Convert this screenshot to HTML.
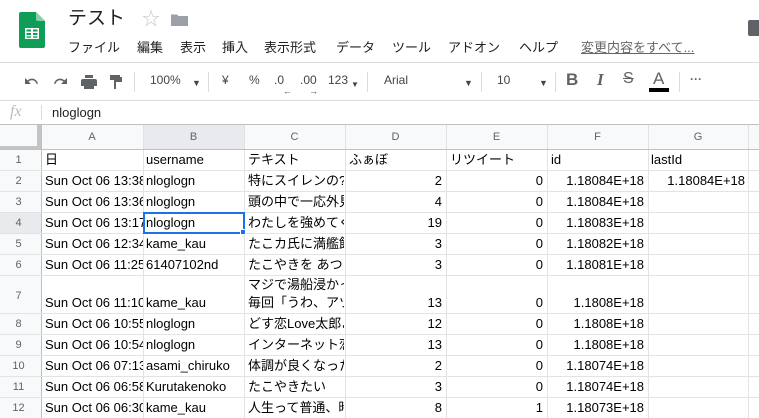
<!DOCTYPE html>
<html><head><meta charset="utf-8"><style>
*{margin:0;padding:0;box-sizing:border-box}
body{width:759px;height:418px;overflow:hidden;background:#fff;font-family:"Liberation Sans","Noto Sans CJK JP",sans-serif;position:relative;color:#202124}
.a{position:absolute;white-space:nowrap}
.menu{font-size:13px;top:39px;color:#202124;line-height:17px}
.tb{top:73px;font-size:12px;color:#444;line-height:15px}
.sep{position:absolute;top:72px;width:1px;height:20px;background:#dadce0}
.gl{position:absolute;background:#e2e3e3}
.cell{position:absolute;font-size:13px;white-space:nowrap;overflow:hidden;color:#000;line-height:16px;height:16px}
.hd{position:absolute;font-size:11px;color:#5f6368;text-align:center;line-height:13px}
</style></head><body>
<svg class="a" style="left:19px;top:12px" width="26" height="36" viewBox="0 0 26 36">
<path d="M2 0H17L26 9V34a2 2 0 0 1-2 2H2a2 2 0 0 1-2-2V2a2 2 0 0 1 2-2z" fill="#0f9d58"/>
<path d="M17 0L26 9H19a2 2 0 0 1-2-2z" fill="#87ceac"/>
<rect x="6" y="16" width="14" height="11" fill="#fff"/>
<rect x="7.5" y="17.5" width="4.5" height="2" fill="#0f9d58"/><rect x="14" y="17.5" width="4.5" height="2" fill="#0f9d58"/>
<rect x="7.5" y="21" width="4.5" height="2" fill="#0f9d58"/><rect x="14" y="21" width="4.5" height="2" fill="#0f9d58"/>
<rect x="7.5" y="24.3" width="4.5" height="1.4" fill="#0f9d58"/><rect x="14" y="24.3" width="4.5" height="1.4" fill="#0f9d58"/>
</svg>
<div class="a" style="left:68px;top:8px;font-size:19px;line-height:22px">テスト</div>
<div class="a" style="left:142px;top:8px;font-size:18px;color:#c8c8c8;line-height:22px">☆</div>
<svg class="a" style="left:171px;top:13px" width="17" height="13"><path d="M0 1.5h6l1.5 1.5H17V13H0z" fill="#9aa0a6"/></svg>
<div class="a menu" style="left:68px">ファイル</div>
<div class="a menu" style="left:137px">編集</div>
<div class="a menu" style="left:180px">表示</div>
<div class="a menu" style="left:222px">挿入</div>
<div class="a menu" style="left:264px">表示形式</div>
<div class="a menu" style="left:336px">データ</div>
<div class="a menu" style="left:392px">ツール</div>
<div class="a menu" style="left:448px">アドオン</div>
<div class="a menu" style="left:519px">ヘルプ</div>
<div class="a menu" style="left:581px;color:#666;text-decoration:underline">変更内容をすべて...</div>
<div class="a" style="left:748px;top:20px;width:14px;height:16px;background:#5f6368;border-radius:2px"></div>
<div class="a" style="left:0;top:62px;width:759px;height:1px;background:#dadce0"></div>
<svg class="a" style="left:22px;top:73px" width="100" height="16" fill="#5f6368">
<path d="M3 5v6h6L6.5 8.5C8 7.3 10 7 11.5 7.5 13 8 14 9.3 14.5 11l1.5-.5C15.3 8.2 13.6 6.3 11.3 5.8 9.3 5.4 7.2 5.9 5.6 7.4z"/>
<path d="M45 5v6h-6l2.5-2.5C40 7.3 38 7 36.5 7.5 35 8 34 9.3 33.5 11L32 10.5c.7-2.3 2.4-4.2 4.7-4.7 2-.4 4.1.1 5.7 1.6z"/>
<path d="M61 6h12a2 2 0 0 1 2 2v5h-3v3h-10v-3h-3V8a2 2 0 0 1 2-2zM63 2h8v3h-8zM64 11h6v3h-6z"/>
<path d="M88 2h10v5h-10zM98 4h2v5h-6v7h-2V7h6z"/>
</svg>
<div class="sep" style="left:134px"></div>
<div class="a tb" style="left:150px">100%</div>
<div class="a tb" style="left:192px;font-size:9px;top:76px">▼</div>
<div class="sep" style="left:208px"></div>
<div class="a tb" style="left:222px">¥</div>
<div class="a tb" style="left:249px">%</div>
<div class="a tb" style="left:274px">.0</div>
<div class="a tb" style="left:300px">.00</div>
<div class="a" style="left:283px;top:86px;font-size:9px;color:#444">←</div>
<div class="a" style="left:309px;top:86px;font-size:9px;color:#444">→</div>
<div class="a tb" style="left:328px">123</div>
<div class="a tb" style="left:351px;font-size:8px;top:77px">▼</div>
<div class="sep" style="left:367px"></div>
<div class="a tb" style="left:384px">Arial</div>
<div class="a tb" style="left:464px;font-size:9px;top:76px">▼</div>
<div class="sep" style="left:481px"></div>
<div class="a tb" style="left:497px">10</div>
<div class="a tb" style="left:539px;font-size:9px;top:76px">▼</div>
<div class="sep" style="left:555px"></div>
<div class="a" style="left:566px;top:70px;font-size:17px;font-weight:bold;color:#5f6368">B</div>
<div class="a" style="left:597px;top:70px;font-size:17px;font-style:italic;color:#5f6368;font-family:'Liberation Serif',serif;font-weight:bold">I</div>
<div class="a" style="left:623px;top:70px;font-size:16px;color:#5f6368;text-decoration:line-through">S</div>
<div class="a" style="left:653px;top:69px;font-size:17px;color:#5f6368">A</div>
<div class="a" style="left:649px;top:88px;width:20px;height:4px;background:#000"></div>
<div class="sep" style="left:679px"></div>
<div class="a tb" style="left:690px;top:72px;font-weight:bold;color:#5f6368">···</div>
<div class="a" style="left:0;top:100px;width:759px;height:1px;background:#dadce0"></div>
<div class="a" style="left:10px;top:103px;font-size:16px;color:#bbb;font-style:italic;font-family:'Liberation Serif',serif">fx</div>
<div class="a" style="left:41px;top:105px;width:1px;height:15px;background:#dadce0"></div>
<div class="a" style="left:52px;top:105px;font-size:13px">nloglogn</div>
<div class="a" style="left:0;top:125px;width:759px;height:24px;background:#f8f9fa"></div>
<div class="a" style="left:0;top:125px;width:41px;height:293px;background:#f8f9fa"></div>
<div class="a" style="left:143px;top:125px;width:101px;height:24px;background:#e8eaed"></div>
<div class="a" style="left:0;top:212px;width:41px;height:21px;background:#e8eaed"></div>
<div class="a" style="left:0;top:124px;width:759px;height:1px;background:#c0c0c0"></div>
<div class="a" style="left:37px;top:125px;width:4px;height:24px;background:#c4c4c4"></div>
<div class="a" style="left:0;top:146px;width:41px;height:3px;background:#c4c4c4"></div>
<div class="gl" style="left:41px;top:125px;width:1px;height:293px;background:#c0c0c0"></div>
<div class="gl" style="left:143px;top:125px;width:1px;height:293px"></div>
<div class="gl" style="left:244px;top:125px;width:1px;height:293px"></div>
<div class="gl" style="left:345px;top:125px;width:1px;height:293px"></div>
<div class="gl" style="left:446px;top:125px;width:1px;height:293px"></div>
<div class="gl" style="left:547px;top:125px;width:1px;height:293px"></div>
<div class="gl" style="left:648px;top:125px;width:1px;height:293px"></div>
<div class="gl" style="left:748px;top:125px;width:1px;height:293px"></div>
<div class="gl" style="left:0;top:149px;width:759px;height:1px;background:#c0c0c0"></div>
<div class="gl" style="left:0;top:170px;width:759px;height:1px"></div>
<div class="gl" style="left:0;top:191px;width:759px;height:1px"></div>
<div class="gl" style="left:0;top:212px;width:759px;height:1px"></div>
<div class="gl" style="left:0;top:233px;width:759px;height:1px"></div>
<div class="gl" style="left:0;top:254px;width:759px;height:1px"></div>
<div class="gl" style="left:0;top:275px;width:759px;height:1px"></div>
<div class="gl" style="left:0;top:313px;width:759px;height:1px"></div>
<div class="gl" style="left:0;top:334px;width:759px;height:1px"></div>
<div class="gl" style="left:0;top:355px;width:759px;height:1px"></div>
<div class="gl" style="left:0;top:376px;width:759px;height:1px"></div>
<div class="gl" style="left:0;top:397px;width:759px;height:1px"></div>
<div class="hd" style="left:41px;top:131px;width:102px">A</div>
<div class="hd" style="left:143px;top:131px;width:101px">B</div>
<div class="hd" style="left:244px;top:131px;width:101px">C</div>
<div class="hd" style="left:345px;top:131px;width:101px">D</div>
<div class="hd" style="left:446px;top:131px;width:101px">E</div>
<div class="hd" style="left:547px;top:131px;width:101px">F</div>
<div class="hd" style="left:648px;top:131px;width:100px">G</div>
<div class="hd" style="left:0;width:37px;top:154px">1</div>
<div class="hd" style="left:0;width:37px;top:175px">2</div>
<div class="hd" style="left:0;width:37px;top:196px">3</div>
<div class="hd" style="left:0;width:37px;top:217px">4</div>
<div class="hd" style="left:0;width:37px;top:238px">5</div>
<div class="hd" style="left:0;width:37px;top:259px">6</div>
<div class="hd" style="left:0;width:37px;top:290px">7</div>
<div class="hd" style="left:0;width:37px;top:318px">8</div>
<div class="hd" style="left:0;width:37px;top:339px">9</div>
<div class="hd" style="left:0;width:37px;top:360px">10</div>
<div class="hd" style="left:0;width:37px;top:381px">11</div>
<div class="hd" style="left:0;width:37px;top:402px">12</div>
<div class="cell" style="left:45px;top:152px">日</div>
<div class="cell" style="left:146px;top:152px">username</div>
<div class="cell" style="left:248px;top:152px">テキスト</div>
<div class="cell" style="left:349px;top:152px;width:96px">ふぁぼ</div>
<div class="cell" style="left:450px;top:152px">リツイート</div>
<div class="cell" style="left:551px;top:152px">id</div>
<div class="cell" style="left:651px;top:152px">lastId</div>

<div class="cell" style="left:45px;top:173px;width:98px">Sun Oct 06 13:38</div>
<div class="cell" style="left:146px;top:173px">nloglogn</div>
<div class="cell" style="left:248px;top:173px;width:96px">特にスイレンの?</div>
<div class="cell" style="left:345px;top:173px;width:97px;text-align:right">2</div>
<div class="cell" style="left:446px;top:173px;width:97px;text-align:right">0</div>
<div class="cell" style="left:547px;top:173px;width:97px;text-align:right">1.18084E+18</div>
<div class="cell" style="left:648px;top:173px;width:97px;text-align:right">1.18084E+18</div>

<div class="cell" style="left:45px;top:194px;width:98px">Sun Oct 06 13:36</div>
<div class="cell" style="left:146px;top:194px">nloglogn</div>
<div class="cell" style="left:248px;top:194px;width:96px">頭の中で一応外見</div>
<div class="cell" style="left:345px;top:194px;width:97px;text-align:right">4</div>
<div class="cell" style="left:446px;top:194px;width:97px;text-align:right">0</div>
<div class="cell" style="left:547px;top:194px;width:97px;text-align:right">1.18084E+18</div>

<div class="cell" style="left:45px;top:215px;width:98px">Sun Oct 06 13:17</div>
<div class="cell" style="left:146px;top:215px">nloglogn</div>
<div class="cell" style="left:248px;top:215px;width:96px">わたしを強めてく</div>
<div class="cell" style="left:345px;top:215px;width:97px;text-align:right">19</div>
<div class="cell" style="left:446px;top:215px;width:97px;text-align:right">0</div>
<div class="cell" style="left:547px;top:215px;width:97px;text-align:right">1.18083E+18</div>

<div class="cell" style="left:45px;top:236px;width:98px">Sun Oct 06 12:34</div>
<div class="cell" style="left:146px;top:236px">kame_kau</div>
<div class="cell" style="left:248px;top:236px;width:96px">たこカ氏に満艦飾</div>
<div class="cell" style="left:345px;top:236px;width:97px;text-align:right">3</div>
<div class="cell" style="left:446px;top:236px;width:97px;text-align:right">0</div>
<div class="cell" style="left:547px;top:236px;width:97px;text-align:right">1.18082E+18</div>

<div class="cell" style="left:45px;top:257px;width:98px">Sun Oct 06 11:25</div>
<div class="cell" style="left:146px;top:257px">61407102nd</div>
<div class="cell" style="left:248px;top:257px;width:96px">たこやきを あつ々</div>
<div class="cell" style="left:345px;top:257px;width:97px;text-align:right">3</div>
<div class="cell" style="left:446px;top:257px;width:97px;text-align:right">0</div>
<div class="cell" style="left:547px;top:257px;width:97px;text-align:right">1.18081E+18</div>

<div class="cell" style="left:248px;top:277px;width:96px">マジで湯船浸かっ</div>
<div class="cell" style="left:45px;top:295px;width:98px">Sun Oct 06 11:10</div>
<div class="cell" style="left:146px;top:295px">kame_kau</div>
<div class="cell" style="left:248px;top:295px;width:96px">毎回「うわ、アツ</div>
<div class="cell" style="left:345px;top:295px;width:97px;text-align:right">13</div>
<div class="cell" style="left:446px;top:295px;width:97px;text-align:right">0</div>
<div class="cell" style="left:547px;top:295px;width:97px;text-align:right">1.1808E+18</div>

<div class="cell" style="left:45px;top:316px;width:98px">Sun Oct 06 10:55</div>
<div class="cell" style="left:146px;top:316px">nloglogn</div>
<div class="cell" style="left:248px;top:316px;width:96px">どす恋Love太郎よ</div>
<div class="cell" style="left:345px;top:316px;width:97px;text-align:right">12</div>
<div class="cell" style="left:446px;top:316px;width:97px;text-align:right">0</div>
<div class="cell" style="left:547px;top:316px;width:97px;text-align:right">1.1808E+18</div>

<div class="cell" style="left:45px;top:337px;width:98px">Sun Oct 06 10:54</div>
<div class="cell" style="left:146px;top:337px">nloglogn</div>
<div class="cell" style="left:248px;top:337px;width:96px">インターネット恋</div>
<div class="cell" style="left:345px;top:337px;width:97px;text-align:right">13</div>
<div class="cell" style="left:446px;top:337px;width:97px;text-align:right">0</div>
<div class="cell" style="left:547px;top:337px;width:97px;text-align:right">1.1808E+18</div>

<div class="cell" style="left:45px;top:358px;width:98px">Sun Oct 06 07:13</div>
<div class="cell" style="left:146px;top:358px">asami_chiruko</div>
<div class="cell" style="left:248px;top:358px;width:96px">体調が良くなった</div>
<div class="cell" style="left:345px;top:358px;width:97px;text-align:right">2</div>
<div class="cell" style="left:446px;top:358px;width:97px;text-align:right">0</div>
<div class="cell" style="left:547px;top:358px;width:97px;text-align:right">1.18074E+18</div>

<div class="cell" style="left:45px;top:379px;width:98px">Sun Oct 06 06:58</div>
<div class="cell" style="left:146px;top:379px">Kurutakenoko</div>
<div class="cell" style="left:248px;top:379px;width:96px">たこやきたい</div>
<div class="cell" style="left:345px;top:379px;width:97px;text-align:right">3</div>
<div class="cell" style="left:446px;top:379px;width:97px;text-align:right">0</div>
<div class="cell" style="left:547px;top:379px;width:97px;text-align:right">1.18074E+18</div>

<div class="cell" style="left:45px;top:400px;width:98px">Sun Oct 06 06:30</div>
<div class="cell" style="left:146px;top:400px">kame_kau</div>
<div class="cell" style="left:248px;top:400px;width:96px">人生って普通、時</div>
<div class="cell" style="left:345px;top:400px;width:97px;text-align:right">8</div>
<div class="cell" style="left:446px;top:400px;width:97px;text-align:right">1</div>
<div class="cell" style="left:547px;top:400px;width:97px;text-align:right">1.18073E+18</div>
<div class="a" style="left:143px;top:212px;width:102px;height:22px;border:2px solid #1a73e8"></div>
<div class="a" style="left:240px;top:229px;width:6px;height:6px;background:#1a73e8;border:1px solid #fff"></div>
</body></html>
